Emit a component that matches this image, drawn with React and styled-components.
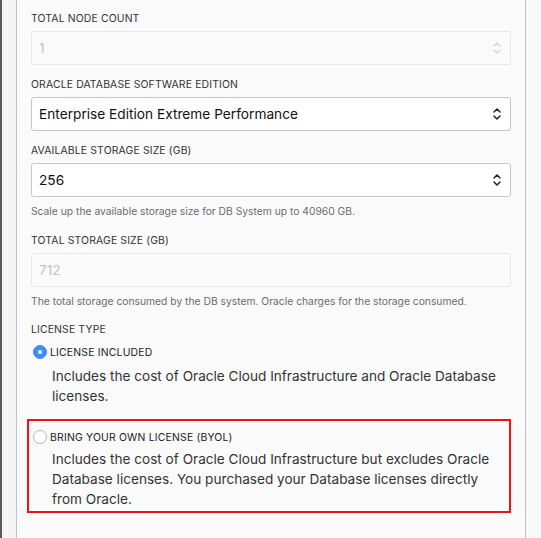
import React from "react";
import styled, { createGlobalStyle } from "styled-components";

const Global = createGlobalStyle`
  html, body { margin: 0; padding: 0; background: #f7f7f8; }
  body { font-family: Inter, "Helvetica Neue", Arial, sans-serif; color: #222; }
  * { box-sizing: border-box; }
`;

const Page = styled.div`
  display: flex;
  width: 541px;
  height: 538px;
  overflow: hidden;
  background: #f7f7f8;
`;

const DarkEdge = styled.div`
  width: 2px;
  background: #5a5a5c;
  flex: none;
`;

const Gutter = styled.div`
  width: 14px;
  background: #f4f4f5;
  flex: none;
`;

const Panel = styled.div`
  width: 510px;
  flex: none;
  background: #fafafb;
  border-left: 1px solid #bfc3cb;
  border-right: 1px solid #bfc3cb;
  padding: 11px 14px 0 14px;
  display: flex;
  flex-direction: column;
`;

const Field = styled.div`
  display: flex;
  flex-direction: column;
  margin-bottom: ${(p) => p.$mb ?? 12}px;
`;

const Label = styled.div`
  font-size: 10.4px;
  line-height: 15px;
  letter-spacing: 0.15px;
  text-transform: uppercase;
  color: #333;
  margin-bottom: 5px;
`;

const InputBox = styled.div`
  height: 34px;
  border: 1px solid ${(p) => (p.$disabled ? "#e6e7ea" : "#c4c6cb")};
  border-radius: 3px;
  background: ${(p) => (p.$disabled ? "#fafafb" : "#fff")};
  display: flex;
  align-items: center;
  justify-content: space-between;
  padding: 0 8px 0 7px;
  font-size: 13.7px;
  color: ${(p) => (p.$disabled ? "#c2c3c7" : "#111")};
`;

const Help = styled.div`
  font-size: 10.3px;
  line-height: 14px;
  color: #6b6c70;
  margin-top: 7px;
`;

const Spinner = ({ disabled }) => (
  <svg width="10" height="14" viewBox="0 0 10 14" fill="none">
    <path d="M2 5 L5 2 L8 5" stroke={disabled ? "#d6d7da" : "#222"} strokeWidth="1.5" strokeLinecap="round" strokeLinejoin="round" />
    <path d="M2 9 L5 12 L8 9" stroke={disabled ? "#d6d7da" : "#222"} strokeWidth="1.5" strokeLinecap="round" strokeLinejoin="round" />
  </svg>
);

const SectionTitle = styled.div`
  font-size: 10.4px;
  line-height: 14px;
  letter-spacing: 0.15px;
  text-transform: uppercase;
  color: #333;
  margin-top: 15px;
`;

const Option = styled.div`
  margin: ${(p) => (p.$boxed ? "13px 0 0 -4px" : "7px 0 0 0")};
  padding: ${(p) => (p.$boxed ? "8px 0 2px 2px" : "0")};
  border: ${(p) => (p.$boxed ? "2px solid #ec1317" : "none")};
`;

const OptionHead = styled.div`
  display: flex;
  align-items: center;
  gap: 3px;
  height: 16px;
`;

const Radio = styled.span`
  width: 14px;
  height: 14px;
  border-radius: 50%;
  flex: none;
  margin-left: 2px;
  background: ${(p) => (p.$checked ? "#3d8ef0" : "#fff")};
  border: 1px solid ${(p) => (p.$checked ? "#3d8ef0" : "#b5b7bb")};
  display: flex;
  align-items: center;
  justify-content: center;
  &::after {
    content: "";
    width: 4px;
    height: 4px;
    border-radius: 50%;
    background: #fff;
    display: ${(p) => (p.$checked ? "block" : "none")};
  }
`;

const OptionLabel = styled.span`
  font-size: 10.4px;
  letter-spacing: 0.2px;
  text-transform: uppercase;
  color: #222;
`;

const OptionDesc = styled.div`
  font-size: 13.6px;
  line-height: 20px;
  color: #333;
  padding-left: 21px;
  margin-top: ${(p) => (p.$tight ? 4 : 6)}px;
`;

const RightArea = styled.div`
  flex: 1;
  background: #f8f8f9;
`;

export default function App() {
  return (
    <>
      <Global />
      <Page>
        <DarkEdge />
        <Gutter />
        <Panel>
          <Field>
            <Label>Total Node Count</Label>
            <InputBox $disabled>
              <span>1</span>
              <Spinner disabled />
            </InputBox>
          </Field>
          <Field>
            <Label>Oracle Database Software Edition</Label>
            <InputBox>
              <span>Enterprise Edition Extreme Performance</span>
              <Spinner />
            </InputBox>
          </Field>
          <Field $mb={15}>
            <Label>Available Storage Size (GB)</Label>
            <InputBox>
              <span>256</span>
              <Spinner />
            </InputBox>
            <Help>Scale up the available storage size for DB System up to 40960 GB.</Help>
          </Field>
          <Field $mb={0}>
            <Label>Total Storage Size (GB)</Label>
            <InputBox $disabled>
              <span>712</span>
            </InputBox>
            <Help>The total storage consumed by the DB system. Oracle charges for the storage consumed.</Help>
          </Field>
          <SectionTitle>License Type</SectionTitle>
          <Option>
            <OptionHead>
              <Radio $checked />
              <OptionLabel>License Included</OptionLabel>
            </OptionHead>
            <OptionDesc>
              Includes the cost of Oracle Cloud Infrastructure and Oracle Database licenses.
            </OptionDesc>
          </Option>
          <Option $boxed>
            <OptionHead>
              <Radio />
              <OptionLabel>Bring Your Own License (BYOL)</OptionLabel>
            </OptionHead>
            <OptionDesc $tight>
              Includes the cost of Oracle Cloud Infrastructure but excludes Oracle Database licenses. You purchased your Database licenses directly from Oracle.
            </OptionDesc>
          </Option>
        </Panel>
        <RightArea />
      </Page>
    </>
  );
}
